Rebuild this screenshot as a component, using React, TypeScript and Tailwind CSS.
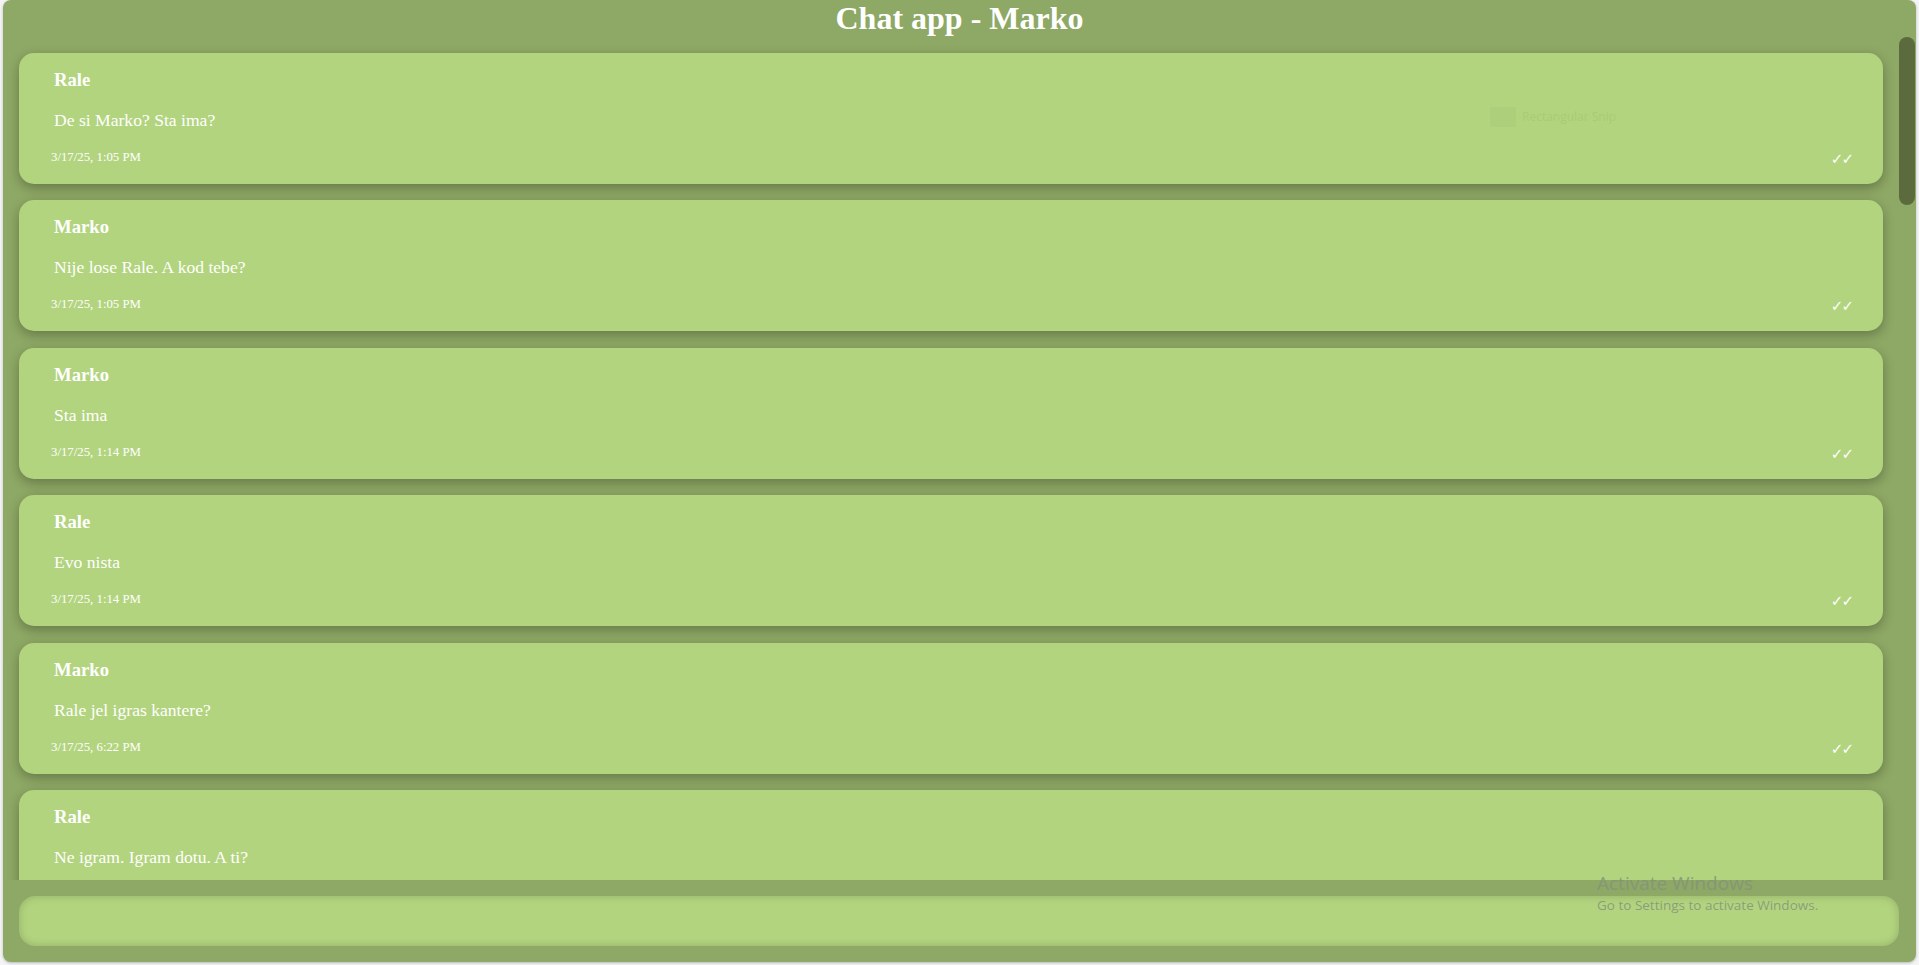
type Message = {
  id: number;
  user: string;
  text: string;
  time: string;
};

const messages: Message[] = [
  { id: 1, user: "Rale", text: "De si Marko? Sta ima?", time: "3/17/25, 1:05 PM" },
  { id: 2, user: "Marko", text: "Nije lose Rale. A kod tebe?", time: "3/17/25, 1:05 PM" },
  { id: 3, user: "Marko", text: "Sta ima", time: "3/17/25, 1:14 PM" },
  { id: 4, user: "Rale", text: "Evo nista", time: "3/17/25, 1:14 PM" },
  { id: 5, user: "Marko", text: "Rale jel igras kantere?", time: "3/17/25, 6:22 PM" },
  { id: 6, user: "Rale", text: "Ne igram. Igram dotu. A ti?", time: "3/17/25, 6:23 PM" },
  { id: 7, user: "Marko", text: "Ja igram kantere", time: "3/17/25, 6:24 PM" },
  { id: 8, user: "Rale", text: "Ajde neki put zajedno", time: "3/17/25, 6:25 PM" },
  { id: 9, user: "Marko", text: "Moze, javi kad si slobodan", time: "3/17/25, 6:26 PM" },
  { id: 10, user: "Rale", text: "Veceras posle 9", time: "3/17/25, 6:30 PM" },
  { id: 11, user: "Marko", text: "Dogovoreno", time: "3/17/25, 6:31 PM" },
  { id: 12, user: "Rale", text: "Jesi tu?", time: "3/17/25, 9:02 PM" },
  { id: 13, user: "Marko", text: "Tu sam, ulazim", time: "3/17/25, 9:04 PM" },
  { id: 14, user: "Rale", text: "Ok", time: "3/17/25, 9:05 PM" },
  { id: 15, user: "Marko", text: "Dobra partija", time: "3/17/25, 11:40 PM" },
  { id: 16, user: "Rale", text: "Jeste, ajmo sutra opet", time: "3/17/25, 11:41 PM" },
  { id: 17, user: "Marko", text: "Moze", time: "3/17/25, 11:42 PM" },
  { id: 18, user: "Rale", text: "Laku noc", time: "3/17/25, 11:43 PM" },
  { id: 19, user: "Marko", text: "Laku noc Rale", time: "3/17/25, 11:43 PM" },
  { id: 20, user: "Rale", text: "Dobro jutro", time: "3/18/25, 9:10 AM" },
  { id: 21, user: "Marko", text: "Dobro jutro. Sta radis?", time: "3/18/25, 9:15 AM" },
  { id: 22, user: "Rale", text: "Idem na posao", time: "3/18/25, 9:16 AM" },
  { id: 23, user: "Marko", text: "I ja", time: "3/18/25, 9:17 AM" },
  { id: 24, user: "Rale", text: "Vidimo se posle", time: "3/18/25, 9:18 AM" },
  { id: 25, user: "Marko", text: "Vazi", time: "3/18/25, 9:18 AM" },
  { id: 26, user: "Rale", text: "Stigao sam kuci", time: "3/18/25, 5:32 PM" },
  { id: 27, user: "Marko", text: "Super, ajmo partiju", time: "3/18/25, 5:40 PM" },
  { id: 28, user: "Rale", text: "Moze za pola sata", time: "3/18/25, 5:41 PM" },
];

function MessageCard({ data }: { data: Message }) {
  return (
    <div className="h-[131px] shrink-0 rounded-[15px] bg-[#b2d47e] shadow-[0_4px_12px_rgba(0,0,0,0.28)] pt-[16px] text-white">
      <h3 className="pl-[35px] text-[18.72px] font-bold leading-[22px]">{data.user}</h3>
      <p className="pl-[35px] mt-[19px] text-[17.6px] leading-[20px]">{data.text}</p>
      <div className="mt-[20px] flex items-start justify-between pl-[32px] pr-[31px]">
        <span className="text-[12.8px] leading-[15px]">{data.time}</span>
        <span className="font-['DejaVu_Sans',sans-serif] text-[15px] font-bold leading-[18px] tracking-[-2px]">
          ✓✓
        </span>
      </div>
    </div>
  );
}

export default function App() {
  return (
    <div className="relative min-h-[965px] bg-[#f4f4f4] px-[3px] pb-[3px] font-['Liberation_Serif',serif]">
      <div className="flex h-[962px] flex-col overflow-hidden rounded-[8px] bg-[#8ea865] shadow-[0_1px_3px_rgba(0,0,0,0.25)]">
        <h1 className="h-[37px] shrink-0 text-center text-[32px] font-bold leading-[37px] text-white">
          Chat app - Marko
        </h1>
        <div className="flex min-h-0 flex-1">
          <div className="flex min-w-0 flex-1 flex-col gap-[16.4px] overflow-y-auto p-[16px] [scrollbar-width:none]">
            {messages.map((m) => (
              <MessageCard key={`msg_${m.id}`} data={m} />
            ))}
          </div>
          <div className="w-[17px] shrink-0">
            <div className="h-[168px] w-[16px] rounded-full bg-[#5b6b3d]" />
          </div>
        </div>
        <div className="h-[82px] shrink-0 py-[16px] pl-[16px] pr-[17px]">
          <input
            type="text"
            className="h-[50px] w-full rounded-[16px] bg-[#b2d47e] px-4 text-[17.6px] text-white shadow-[inset_0_0_8px_rgba(0,0,0,0.18)] outline-none"
          />
        </div>
      </div>

      {/* desktop overlays visible in the capture */}
      <div className="pointer-events-none absolute left-[1490px] top-[107px] flex items-center gap-[6px] opacity-[0.07]">
        <div className="h-[20px] w-[26px] rounded-[2px] bg-[#6f8f4a]" />
        <span className="font-['Open_Sans',sans-serif] text-[12px] text-[#3f5a20]">Rectangular Snip</span>
      </div>
      <div className="pointer-events-none absolute left-[1597px] top-[871px] font-['Open_Sans',sans-serif] text-[#84937a]/85">
        <div className="text-[19px] leading-[24px]">Activate Windows</div>
        <div className="text-[13.5px] leading-[20px]">Go to Settings to activate Windows.</div>
      </div>
    </div>
  );
}
